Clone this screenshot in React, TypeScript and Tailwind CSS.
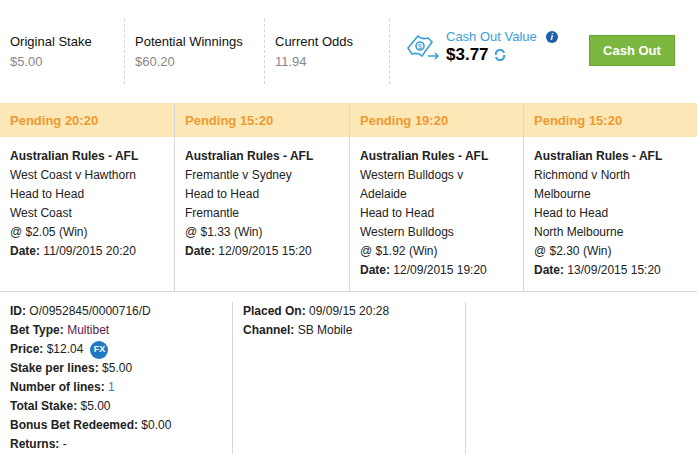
import React from "react";

const legs = [
  { pending: "Pending 20:20", lines: ["West Coast v Hawthorn", "Head to Head", "West Coast", "@ $2.05 (Win)"], date: "11/09/2015 20:20" },
  { pending: "Pending 15:20", lines: ["Fremantle v Sydney", "Head to Head", "Fremantle", "@ $1.33 (Win)"], date: "12/09/2015 15:20" },
  { pending: "Pending 19:20", lines: ["Western Bulldogs v", "Adelaide", "Head to Head", "Western Bulldogs", "@ $1.92 (Win)"], date: "12/09/2015 19:20" },
  { pending: "Pending 15:20", lines: ["Richmond v North", "Melbourne", "Head to Head", "North Melbourne", "@ $2.30 (Win)"], date: "13/09/2015 15:20" },
];

const Stat = ({ label, value, border }: { label: string; value: string; border: boolean }) => (
  <div className={`h-[65px] flex flex-col justify-center pl-[10px] ${border ? "border-r border-dashed border-[#d4d4d4]" : ""}`}>
    <div className="text-[13px] text-[#111] leading-[16px]">{label}</div>
    <div className="text-[13px] text-[#888] leading-[16px] mt-[4px]">{value}</div>
  </div>
);

export default function App() {
  return (
    <div className="w-[697px] h-[469px] bg-white text-[12px] leading-[19px] text-[#222] overflow-hidden" style={{ fontFamily: "'Liberation Sans', Arial, sans-serif" }}>
      <div className="h-[103px] flex items-center">
        <div className="grid grid-cols-[125px_140px_125px] w-[390px]">
          <Stat label="Original Stake" value="$5.00" border />
          <div className="pl-[0px]"><Stat label="Potential Winnings" value="$60.20" border /></div>
          <Stat label="Current Odds" value="11.94" border />
        </div>
        <div className="flex items-center pl-[16px] w-[199px] -mt-[10px]">
          <svg width="36" height="30" viewBox="0 0 36 30" fill="none" stroke="#3aa0d8" strokeWidth="1.6">
            <path d="M2 16 L12 4 Q16 8 22 6 L26 10 L16 24 Q12 20 6 22 Z" />
            <circle cx="14" cy="14" r="4" />
            <text x="12" y="17" fontSize="7" fill="#3aa0d8" stroke="none">$</text>
            <path d="M22 24 H32 M29 21 L32 24 L29 27" />
          </svg>
          <div className="ml-[4px]">
            <div className="flex items-center text-[13px] text-[#3aa0d8] leading-[16px]">
              Cash Out Value
              <span className="ml-[9px] w-[12px] h-[12px] rounded-full bg-[#1d5fa8] text-white text-[9px] font-bold italic flex items-center justify-center">i</span>
            </div>
            <div className="flex items-center text-[17px] font-bold text-black leading-[20px]">
              $3.77
              <svg className="ml-[5px]" width="12" height="12" viewBox="0 0 12 12" fill="none" stroke="#3aa0d8" strokeWidth="2">
                <path d="M2 6 A4 4 0 0 1 10 4" />
                <path d="M10 6 A4 4 0 0 1 2 8" />
              </svg>
            </div>
          </div>
        </div>
        <button className="w-[86px] h-[31px] bg-[#7cb83f] text-white text-[13px] font-bold border border-[#6aa431] -mt-[3px]">Cash Out</button>
      </div>
      <div className="grid grid-cols-[175px_175px_174px_173px] border-b border-[#d8d8d8]">
        {legs.map((l, i) => (
          <div key={i} className={i < 3 ? "border-r border-[#d8d8d8]" : ""}>
            <div className="h-[34px] bg-[#fce7b6] flex items-center pl-[10px] text-[13px] font-bold text-[#ee9a32]">{l.pending}</div>
            <div className="px-[10px] pt-[10px] h-[154px]">
              <div className="font-bold">Australian Rules - AFL</div>
              {l.lines.map((t, j) => <div key={j}>{t}</div>)}
              <div><b>Date:</b> {l.date}</div>
            </div>
          </div>
        ))}
      </div>
      <div className="flex pt-[10px]">
        <div className="w-[233px] pl-[10px] border-r border-[#d8d8d8] h-[152px]">
          <div><b>ID:</b> O/0952845/0000716/D</div>
          <div><b>Bet Type:</b> <span className="text-[#5a1a50]">Multibet</span></div>
          <div className="flex items-center"><b>Price:</b>&nbsp;$12.04<span className="ml-[7px] w-[18px] h-[18px] rounded-full bg-[#1f78c1] text-white text-[9px] font-bold flex items-center justify-center">FX</span></div>
          <div><b>Stake per lines:</b> $5.00</div>
          <div><b>Number of lines:</b> <span className="text-[#3a7fc0]">1</span></div>
          <div><b>Total Stake:</b> $5.00</div>
          <div><b>Bonus Bet Redeemed:</b> $0.00</div>
          <div><b>Returns:</b> -</div>
        </div>
        <div className="w-[233px] pl-[10px] border-r border-[#d8d8d8] h-[152px]">
          <div><b>Placed On:</b> 09/09/15 20:28</div>
          <div><b>Channel:</b> SB Mobile</div>
        </div>
      </div>
    </div>
  );
}
